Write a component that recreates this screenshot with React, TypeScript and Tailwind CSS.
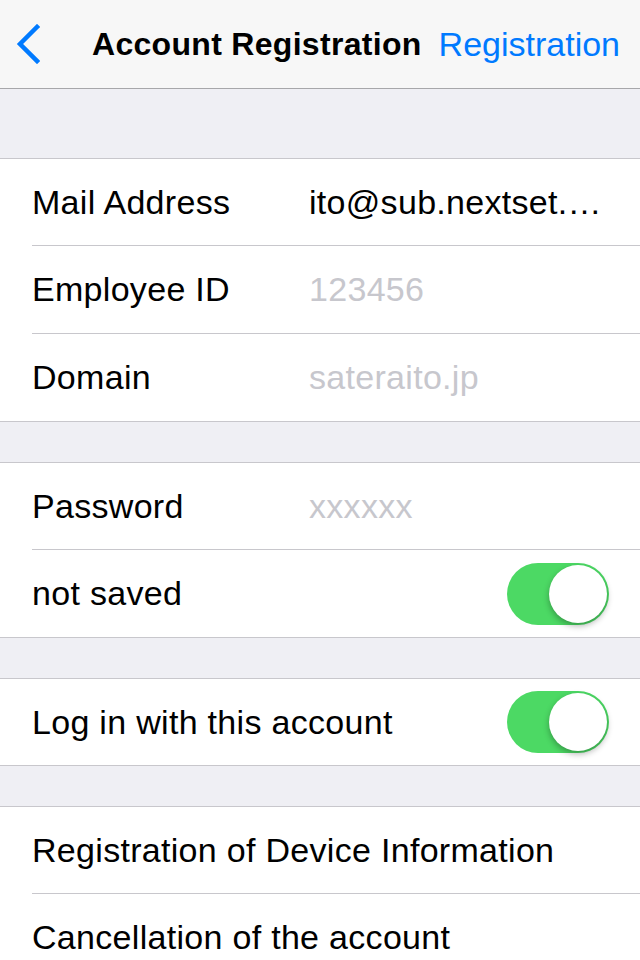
import React from 'react';

const font = { fontFamily: '"Liberation Sans", Arial, sans-serif' };

const Toggle: React.FC = () => (
  <div className="relative w-[102px] h-[62px] rounded-full bg-[#4cd964]">
    <div className="absolute right-[2px] top-[2px] w-[58px] h-[58px] rounded-full bg-white shadow-[0_3px_6px_rgba(0,0,0,0.3)]" />
  </div>
);

type RowProps = {
  label: string;
  value?: string;
  placeholder?: boolean;
  toggle?: boolean;
  first?: boolean;
  last?: boolean;
};

const Row: React.FC<RowProps> = ({ label, value, placeholder, toggle, first, last }) => (
  <div className="pl-8 bg-white">
    <div
      className={`flex items-center pr-8 ${first ? 'h-[86px]' : 'h-[87px]'} ${last ? '' : 'box-content border-b border-[#c8c7cc]'}`}
    >
      <div className="w-[277px] shrink-0 text-[34px] tracking-[0.3px] text-black whitespace-nowrap">{label}</div>
      {value && (
        <div
          className={`flex-1 min-w-0 truncate text-[34px] tracking-[0.3px] ${placeholder ? 'text-[#c7c7cd]' : 'text-black'}`}
        >
          {value}
        </div>
      )}
      {toggle && (
        <div className="ml-auto -mr-[1px]">
          <Toggle />
        </div>
      )}
    </div>
  </div>
);

const Group: React.FC<{ children: React.ReactNode }> = ({ children }) => (
  <div className="border-y border-[#c8c7cc] bg-white">{children}</div>
);

export default function App() {
  return (
    <div className="w-[640px] h-[960px] overflow-hidden bg-[#efeff4]" style={font}>
      {/* Navigation bar */}
      <div className="h-[89px] bg-[#f7f7f7] border-b border-[#a7a7aa] flex items-center">
        <div className="w-[92px] pl-4 shrink-0">
          <svg width="24" height="40" viewBox="0 0 24 40">
            <path d="M21 3 L4 20 L21 37" fill="none" stroke="#007aff" strokeWidth="4.5" strokeLinecap="square" />
          </svg>
        </div>
        <div className="text-[32px] tracking-[0.3px] font-bold text-black whitespace-nowrap">Account Registration</div>
        <div className="ml-auto pr-5 text-[34px] text-[#007aff] whitespace-nowrap">Registration</div>
      </div>

      <div className="h-[69px]" />
      <Group>
        <Row label="Mail Address" value="ito@sub.nextset.co.jp" first />
        <Row label="Employee ID" value="123456" placeholder />
        <Row label="Domain" value="sateraito.jp" placeholder last />
      </Group>

      <div className="h-[40px]" />
      <Group>
        <Row label="Password" value="xxxxxx" placeholder first />
        <Row label="not saved" toggle last />
      </Group>

      <div className="h-[40px]" />
      <Group>
        <Row label="Log in with this account" toggle first last />
      </Group>

      <div className="h-[40px]" />
      <Group>
        <Row label="Registration of Device Information" first />
        <Row label="Cancellation of the account" last />
      </Group>
    </div>
  );
}
